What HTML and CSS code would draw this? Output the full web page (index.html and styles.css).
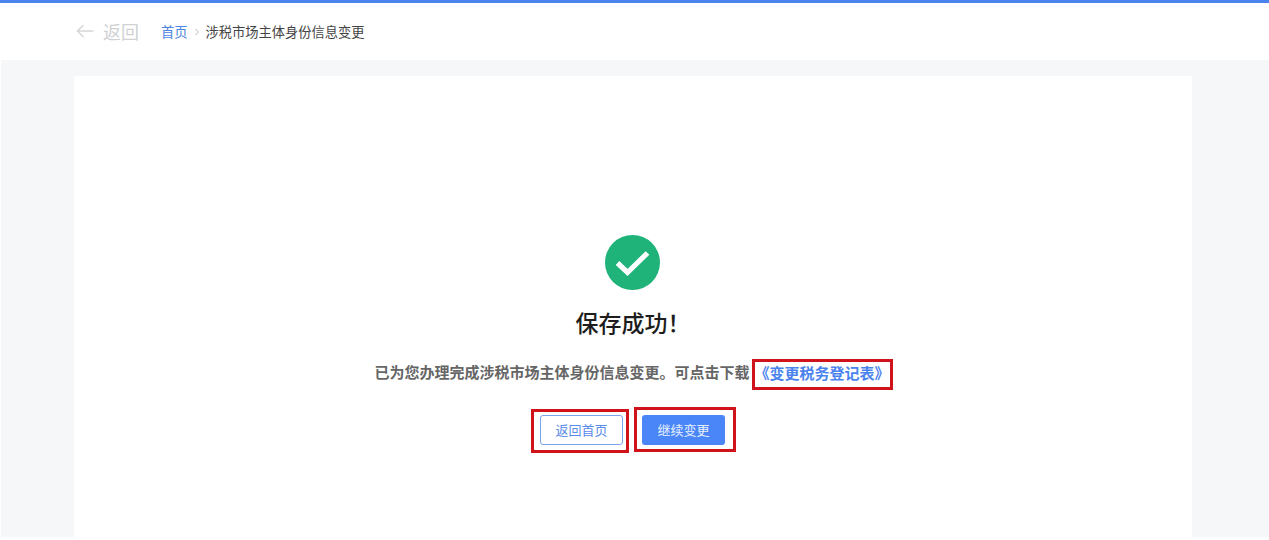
FILE: index.html
```html
<!DOCTYPE html>
<html lang="zh-CN">
<head>
<meta charset="utf-8">
<title>保存成功</title>
<link rel="stylesheet" href="styles.css">
</head>
<body>
<header class="topbar">
  <a class="back">
    <svg class="back-icon" viewBox="0 0 18 14" width="18" height="14"><path d="M7.5 1 1.5 7l6 6M1.5 7H17.5" fill="none" stroke="#d4d6d9" stroke-width="1.5"/></svg>
    <span>返回</span>
  </a>
  <nav class="crumbs">
    <a class="crumb-link">首页</a>
    <svg class="crumb-sep" viewBox="0 0 6 8" width="6" height="8"><path d="M1.5 1 4.5 4l-3 3" fill="none" stroke="#b5b8bd" stroke-width="1"/></svg>
    <span class="crumb-current">涉税市场主体身份信息变更</span>
  </nav>
</header>
<main class="stage">
  <section class="card">
    <svg class="ok-icon" viewBox="0 0 55 55" width="55" height="55">
      <circle cx="27.5" cy="27.5" r="27.5" fill="#1fb37a"/>
      <path d="M12.5 28 22.5 37.5 42.5 18" fill="none" stroke="#fff" stroke-width="5.2"/>
    </svg>
    <h1 class="title">保存成功&#xFF01;</h1>
    <p class="message">已为您办理完成涉税市场主体身份信息变更。可点击下载<a class="doc-link">《变更税务登记表》</a></p>
    <div class="actions">
      <span class="mark mark-home"><button class="btn btn-outline">返回首页</button></span>
      <span class="mark mark-next"><button class="btn btn-solid">继续变更</button></span>
    </div>
  </section>
</main>
</body>
</html>
```

FILE: styles.css
```css
* { box-sizing: border-box; }
html, body { margin: 0; height: 540px; overflow: hidden; background: #fff; }
body { font-family: "Noto Sans CJK SC", "Liberation Sans", sans-serif; }

.topbar {
  height: 60px;
  border-top: 3px solid #4a83ee;
  padding-left: 76px;
  display: flex;
  align-items: center;
  background: #fff;
}
.back { display: flex; align-items: center; gap: 9px; color: #cfd1d4; font-size: 18px; width: 85px; padding-bottom: 1px; }
.back-icon { flex: none; }
.crumbs { display: flex; align-items: center; font-size: 13.25px; }
.crumb-link { color: #4a83e0; }
.crumb-sep { margin: 0 6px 0 6px; }
.crumb-current { color: #444; }

.stage {
  margin-left: 1px;
  height: 477px;
  background: #f6f7f9;
  padding: 16px 77px 0 73px;
}
.card {
  height: 461px;
  background: #fff;
  display: flex;
  flex-direction: column;
  align-items: center;
  padding-top: 159px;
}
.ok-icon { display: block; margin: 0 2px 14px 0; }
.title {
  margin: 0 0 16px;
  font-size: 23px;
  line-height: 36px;
  font-weight: 500;
  color: #1d1d1d;
}
.message {
  margin: 0 0 0 1px;
  font-size: 15px;
  line-height: 31px;
  font-weight: 700;
  color: #666;
  white-space: nowrap;
}
.doc-link {
  display: inline-block;
  color: #4a83ee;
  border: 3px solid #d0121b;
  margin-top: 3px;
  margin-left: 2px;
  padding: 0 0 3px;
  line-height: 22px;
  vertical-align: top;
}
.actions {
  display: flex;
  align-items: flex-start;
  gap: 5px;
  margin: 17px 0 0 1px;
}
.mark { display: block; border: 3px solid #d0121b; }
.mark-home { width: 98px; height: 44px; padding: 3px 0 0 6px; margin-top: 2px; }
.mark-next { width: 102px; height: 45px; padding: 5px 0 0 5px; }
.btn {
  display: block;
  width: 83px;
  height: 30px;
  border-radius: 3px;
  font: 13px "Noto Sans CJK SC", "Liberation Sans", sans-serif;
  padding: 0 0 2px;
}
.btn-outline { background: #fff; border: 1px solid #7ba4ee; color: #5a8cea; }
.btn-solid { background: #4a86f7; border: 0; color: #e8f0ff; }
```
